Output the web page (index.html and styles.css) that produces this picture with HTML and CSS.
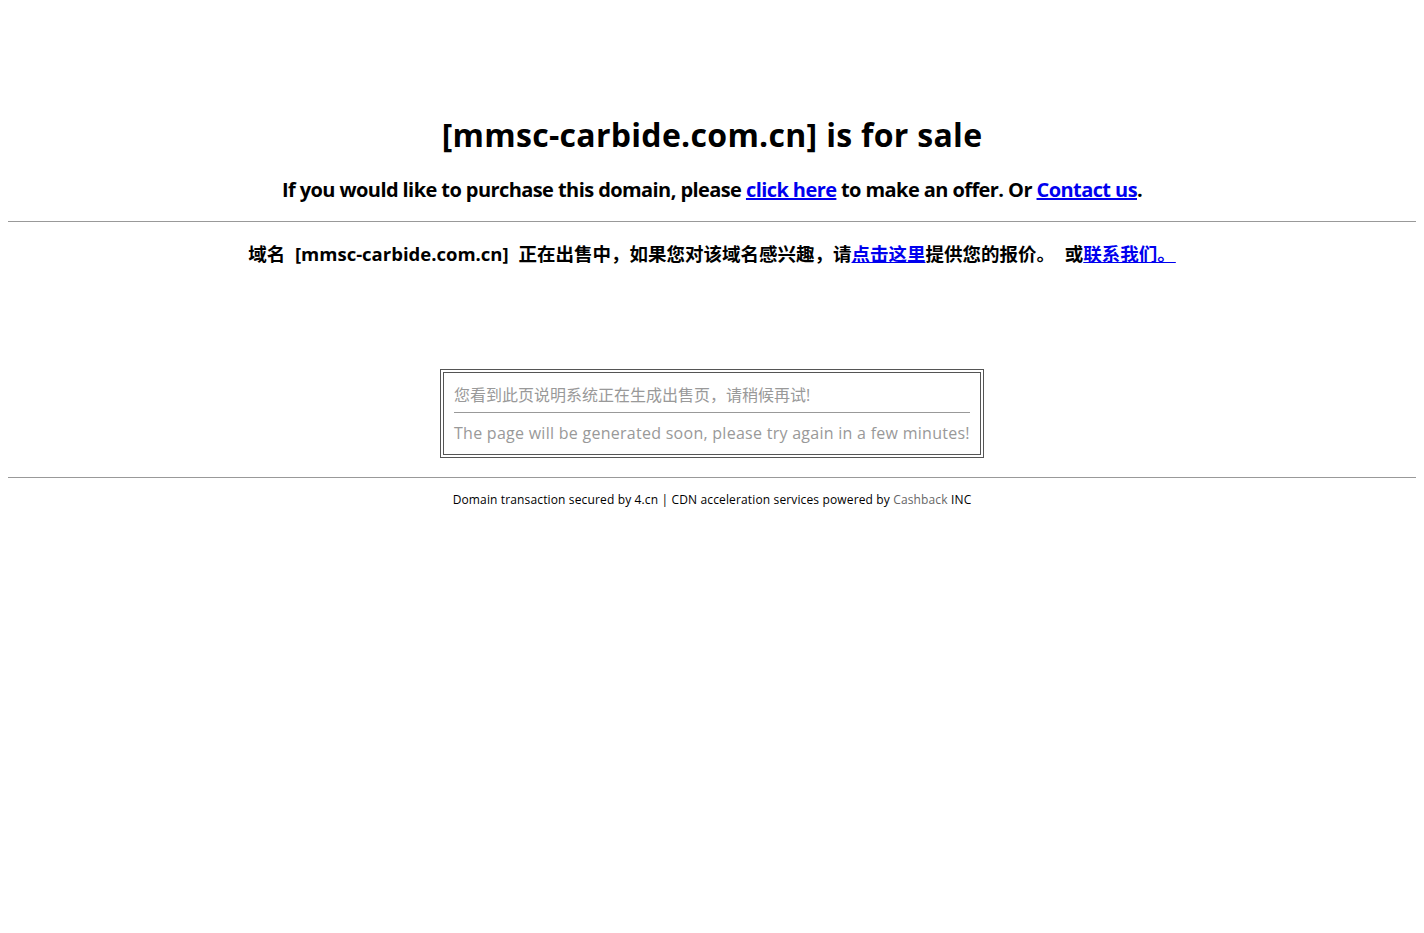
FILE: index.html
```html
<!DOCTYPE html>
<html lang="zh-CN">
<head>
<meta charset="utf-8">
<title>mmsc-carbide.com.cn is for sale</title>
<link rel="stylesheet" href="styles.css">
</head>
<body>
<div class="page">
  <h1 class="title">[mmsc-carbide.com.cn] is for sale</h1>
  <h3 class="sub">If you would like to purchase this domain, please <a href="#">click here</a> to make an offer. Or <a href="#">Contact us</a>.</h3>
  <hr class="rule">
  <h4 class="cn">域名 [mmsc-carbide.com.cn] 正在出售中，如果您对该域名感兴趣，请<a href="#">点击这里</a>提供您的报价。 或<a href="#">联系我们。</a></h4>
  <div class="boxwrap">
    <div class="box">
      <div class="box-inner">
        <p class="msg">您看到此页说明系统正在生成出售页，请稍候再试!</p>
        <hr class="inner-rule">
        <p class="msg msg-en">The page will be generated soon, please try again in a few minutes!</p>
      </div>
    </div>
  </div>
  <hr class="rule rule2">
  <p class="footer">Domain transaction secured by 4.cn | CDN acceleration services powered by <span class="cash">Cashback</span> INC</p>
</div>
</body>
</html>
```
FILE: styles.css
```css
html, body {
  margin: 0;
  padding: 0;
  background: #fff;
}
body {
  font-family: "Open Sans", "Noto Sans CJK SC", sans-serif;
  color: #000;
}
.page {
  padding: 0 8px;
}
.title {
  margin: 115px 0 0;
  font-size: 32px;
  line-height: 40px;
  font-weight: 700;
  letter-spacing: 0.3px;
  text-align: center;
}
.sub {
  margin: 22px 0 0;
  font-size: 20px;
  line-height: 26px;
  font-weight: 700;
  letter-spacing: -0.58px;
  text-align: center;
}
a {
  color: #0000ee;
  text-decoration: underline;
}
.rule {
  margin: 18px 0 0;
  border: 0;
  border-top: 1px solid #999;
  height: 0;
}
.cn {
  margin: 20px 0 0;
  font-size: 18.5px;
  line-height: 24px;
  font-weight: 700;
  word-spacing: 5px;
  text-align: center;
}
.boxwrap {
  display: flex;
  justify-content: center;
  margin-top: 103px;
}
.box {
  width: 538px;
  border: 1px solid #555;
  padding: 2px;
}
.box-inner {
  border: 1px solid #555;
  padding: 10px 10px 9px;
}
.msg {
  margin: 0;
  font-size: 16px;
  line-height: 24px;
  color: #999;
  white-space: nowrap;
}
.msg-en {
  letter-spacing: 0.27px;
}
.inner-rule {
  margin: 5px 0 8px;
  border: 0;
  border-top: 1px solid #999;
  height: 0;
}
.rule2 {
  margin-top: 19px;
}
.footer {
  margin: 13px 0 0;
  font-size: 12px;
  line-height: 17px;
  letter-spacing: 0.14px;
  text-align: center;
}
.cash {
  color: #666;
}
```
